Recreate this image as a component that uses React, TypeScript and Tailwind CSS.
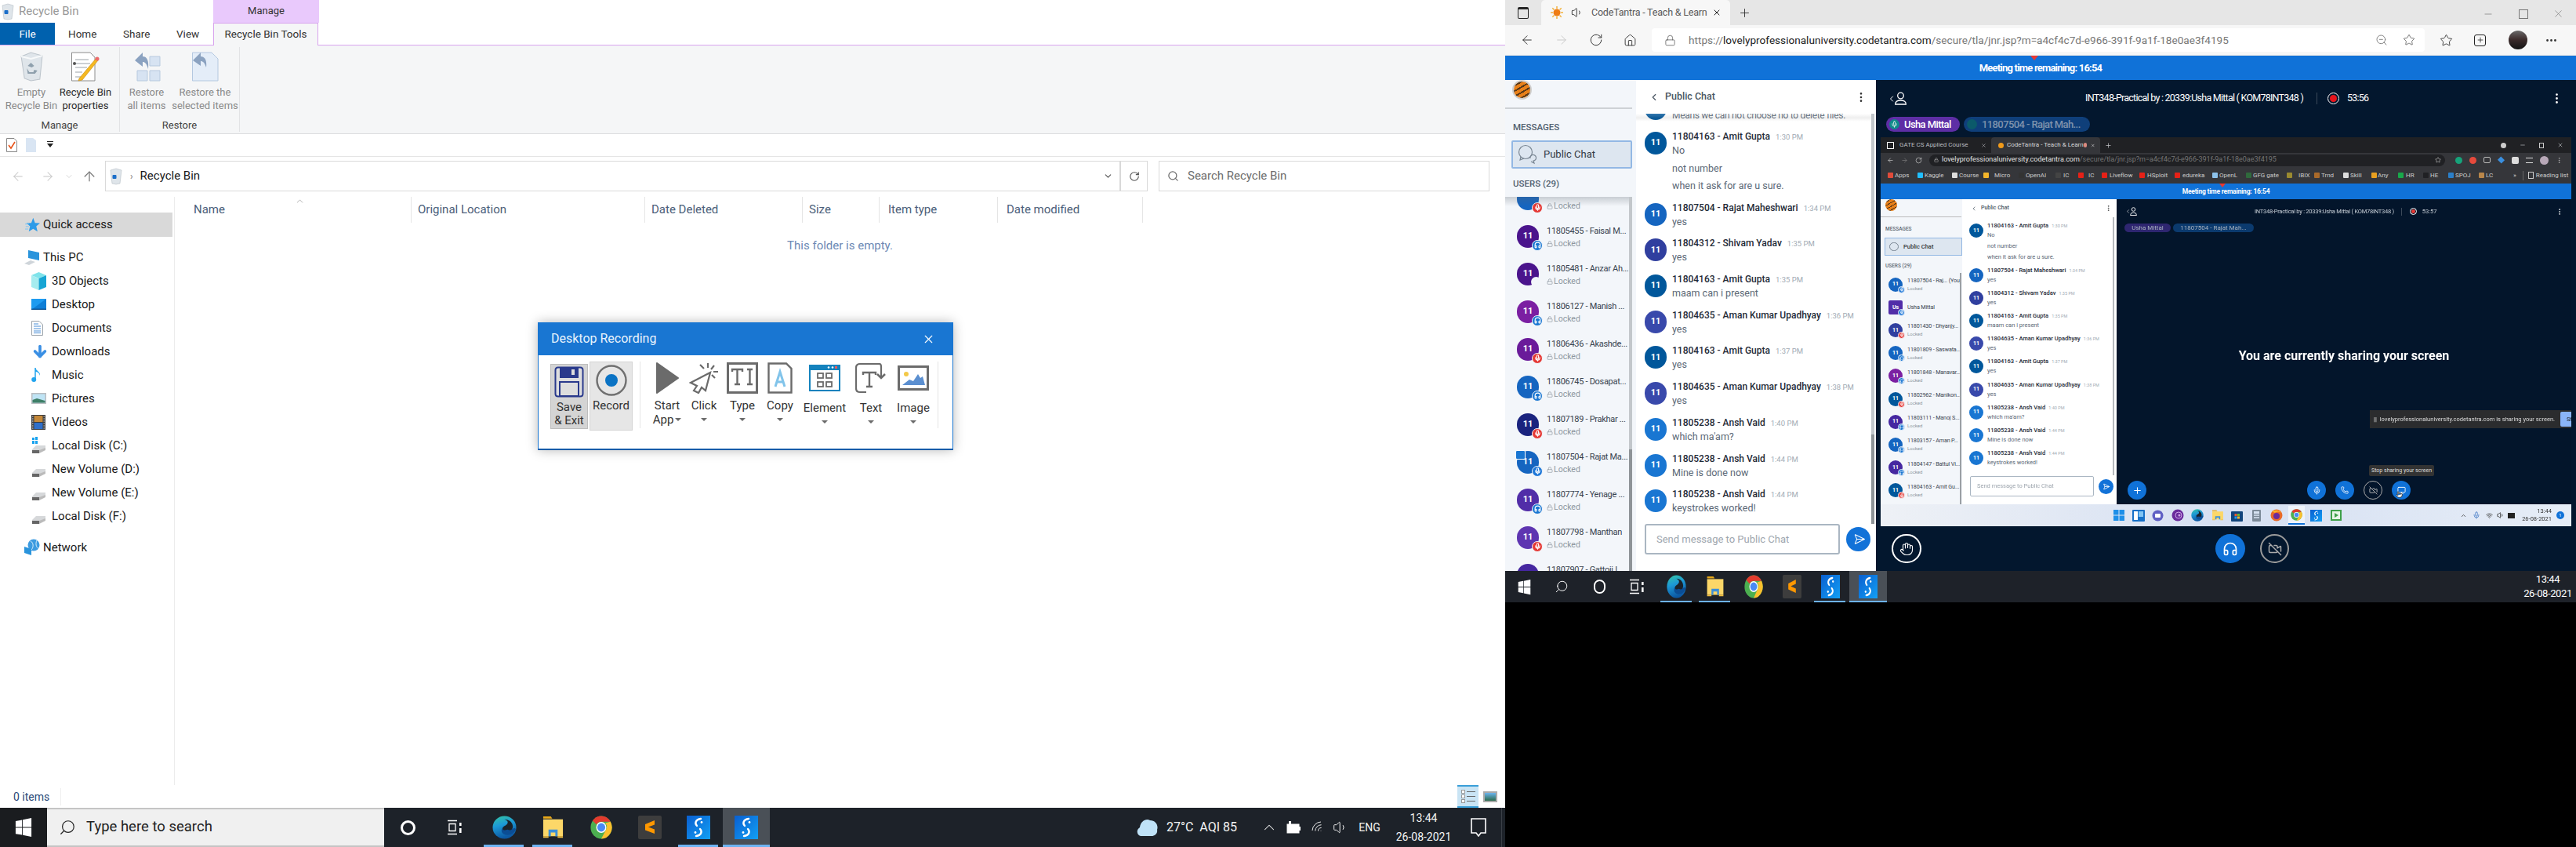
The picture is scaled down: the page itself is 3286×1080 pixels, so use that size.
import { ArrowDown, ArrowLeft, ArrowRight, ArrowUp, ChevronDown, ChevronLeft, ChevronUp, Hand, Headphones, House, Lock, Mic, Minus, Monitor, MoreHorizontal, MoreVertical, Phone, Plus, Pointer, RotateCw, Search, Send, Star, VideoOff, Volume1, Wifi, X, ZoomOut } from "lucide-react"

// small drawn icons
const WinLogo = ({ s = 22 }: { s?: number }) => (
  <svg width={s} height={s + 4} viewBox="0 0 24 24" preserveAspectRatio="none">
    <path d="M1 4.5 10 3.2V11.5H1Z M11 3 23 1V11.5H11Z M1 12.5H10V20.8L1 19.5Z M11 12.5H23V23L11 21Z" fill="#fff" />
  </svg>
)

const EdgeIcon = ({ w = 31, h = 30 }: { w?: number; h?: number }) => (
  <svg width={w} height={h} viewBox="0 0 32 32" preserveAspectRatio="none">
    <defs>
      <linearGradient id="edgeg" x1="0" y1="0" x2="0.3" y2="1">
        <stop offset="0" stopColor="#35c6a0" />
        <stop offset="0.45" stopColor="#1d9ad6" />
        <stop offset="1" stopColor="#0c59a4" />
      </linearGradient>
    </defs>
    <circle cx="16" cy="16" r="15.5" fill="url(#edgeg)" />
    <path d="M31 19C28 26 20 28 15 25 10 22 12 15 18 14 23 13 27 16 26 19 25 21 21 21 20 19 27 21 29 14 31 19Z" fill="#0b4d94" />
    <path d="M20 19C24 21 27 19 27 15 27 9 22 5 16 5 24 8 19 13 16 14 12 16 13 22 20 19Z" fill="#1b2229" />
  </svg>
)

const FolderIcon = ({ w = 29, h = 30 }: { w?: number; h?: number }) => (
  <svg width={w} height={h} viewBox="0 0 30 32" preserveAspectRatio="none">
    <path d="M2 1H12L14 4H2Z" fill="#e8a818" />
    <path d="M2 5H28V28H2Z" fill="#fcd768" />
    <path d="M9 28V19H21V28H18V23H12V28Z" fill="#3a8fd9" />
    <path d="M2 28H9V30H2ZM21 28H28V30H21Z" fill="#f3c040" />
  </svg>
)

const ChromeIcon = ({ w = 28, h = 30 }: { w?: number; h?: number }) => (
  <svg width={w} height={h} viewBox="0 0 32 32" preserveAspectRatio="none">
    <circle cx="16" cy="16" r="15.5" fill="#4caf50" />
    <path d="M16 .5A15.5 15.5 0 0 1 29.4 8.2H16A8 8 0 0 0 9 12L3.3 7A15.5 15.5 0 0 1 16 .5Z" fill="#e33b2e" />
    <path d="M29.4 8.2A15.5 15.5 0 0 1 16 31.5L23 19A8 8 0 0 0 22 10Z" fill="#fbc02d" />
    <circle cx="16" cy="16" r="7.4" fill="#fff" />
    <circle cx="16" cy="16" r="5.8" fill="#4a8af4" />
  </svg>
)

const SublimeIcon = ({ w = 30, h = 30 }: { w?: number; h?: number }) => (
  <svg width={w} height={h} viewBox="0 0 30 30" preserveAspectRatio="none">
    <rect x="0" y="0" width="30" height="30" rx="2" fill="#3d3d3d" />
    <path d="M21 6V11.5L9 16V11Z M9 13 21 17.5V23L9 18.5Z" fill="#ff9800" />
  </svg>
)

const ShareIcon = ({ w = 30, h = 30 }: { w?: number; h?: number }) => (
  <svg width={w} height={h} viewBox="0 0 30 30" preserveAspectRatio="none">
    <defs>
      <linearGradient id="shareg" x1="0" y1="0" x2="1" y2="1">
        <stop offset="0" stopColor="#0a5fd0" />
        <stop offset="1" stopColor="#12a0f5" />
      </linearGradient>
    </defs>
    <rect width="30" height="30" fill="url(#shareg)" />
    <path d="M18 4C11 5 10 10 13 13M12 26C19 25 20 20 17 17" fill="none" stroke="#fff" strokeWidth="2.4" strokeLinecap="round" />
    <circle cx="19" cy="8.5" r="1.4" fill="#fff" />
    <circle cx="11" cy="21.5" r="1.4" fill="#fff" />
  </svg>
)

const TaskView = () => (
  <svg width="20" height="20" viewBox="0 0 20 20" fill="none" stroke="#fff" strokeWidth="1.3">
    <path d="M1 1.5H13M1 18.5H13M3 5.5H11V14.5H3Z" />
    <rect x="16" y="4" width="2.6" height="4" fill="#fff" stroke="none" />
    <rect x="16" y="11" width="2.6" height="6" fill="#fff" stroke="none" />
  </svg>
)

const BinIcon = ({ w = 16, h = 18 }: { w?: number; h?: number }) => (
  <svg width={w} height={h} viewBox="0 0 32 38" preserveAspectRatio="none">
    <path d="M3 6 15 1 29 5 26 35 15 37 7 34Z" fill="#dfe5ea" stroke="#bcc4cb" />
    <path d="M3 6 15 9 29 5" fill="none" stroke="#f7f9fa" strokeWidth="2" />
    <path d="M11 18 15 14 19 18 16 20ZM10 21 13 26 18 26 19 23 23 24 20 28H11Z" fill="#8fa0ad" />
  </svg>
)

const BinBlue = () => (
  <svg width="16" height="22" viewBox="0 0 16 22">
    <path d="M1 3 8 1 15 3 13 20 8 21 3 20Z" fill="#dfe5ea" stroke="#b6bec5" strokeWidth=".6" />
    <rect x="3.5" y="9" width="5" height="5" rx="1" fill="#1c6fc9" />
  </svg>
)

const QuickStar = () => (
  <svg width="19" height="19" viewBox="0 0 24 24">
    <path d="M13 1 16 9 24 9.5 18 14.5 20 23 13 18.5 6 23 8 14.5 2 9.5 10 9Z" fill="#2c9be8" />
    <path d="M0 11H6M1 15H6M0 19H5" stroke="#7cc4f2" strokeWidth="1.2" />
  </svg>
)

const DiskIcon = ({ win }: { win?: boolean }) => (
  <svg width="19" height="22" viewBox="0 0 19 22">
    {win && <path d="M1 1H4V4H1ZM5 0H8V4H5ZM1 5H4V9H1ZM5 5H8V9H5Z" fill="#18a2ee" />}
    <path d="M1 16 6 11H18V15L2 21H1Z" fill="#d6d8da" />
    <path d="M1 17H10V21H1Z" fill="#666" />
    <path d="M10 17 18 14V17L10 21Z" fill="#bbb" />
  </svg>
)

const NavIcon = ({ kind }: { kind: string }) => {
  if (kind === "pc")
    return (
      <svg width="20" height="20" viewBox="0 0 20 20">
        <path d="M5 1 19 4V14L5 11Z" fill="#2a94dc" />
        <path d="M0 18 8 14 14 16 6 20Z" fill="#cfd5da" />
      </svg>
    )
  if (kind === "3d")
    return (
      <svg width="19" height="24" viewBox="0 0 19 24">
        <path d="M9.5 1 19 5 9.5 9 0 5Z" fill="#7fe3ea" />
        <path d="M0 5 9.5 9V24L0 20Z" fill="#a5ecef" />
        <path d="M19 5V20L9.5 24V9Z" fill="#17a5d4" />
      </svg>
    )
  if (kind === "desk")
    return (
      <svg width="19" height="14" viewBox="0 0 19 14">
        <rect width="19" height="14" fill="#1e9bf0" />
        <path d="M0 14 19 0V14Z" fill="#0e7ed6" />
        <rect y="12.6" width="19" height="1.4" fill="#084f91" />
      </svg>
    )
  if (kind === "doc")
    return (
      <svg width="15" height="19" viewBox="0 0 15 19">
        <path d="M.5.5H10L14.5 5V18.5H.5Z" fill="#fdfdfd" stroke="#9ba3aa" />
        <path d="M3 4H9M3 7H12M3 10H12M3 13H12M3 15.5H12" stroke="#4a90d9" strokeWidth="1" />
      </svg>
    )
  if (kind === "down") return <ArrowDown size={22} strokeWidth={4} color="#3a8fe4" />
  if (kind === "music")
    return (
      <svg width="13" height="20" viewBox="0 0 13 20">
        <path d="M5 1V15" stroke="#22a4ee" strokeWidth="1.5" />
        <path d="M5 1C6 5 12 6 11 11 10 7 7 6 5 6Z" fill="#22a4ee" />
        <ellipse cx="3.2" cy="16" rx="3" ry="3" fill="#22a4ee" />
      </svg>
    )
  if (kind === "pic")
    return (
      <svg width="19" height="14" viewBox="0 0 19 14">
        <rect width="19" height="14" fill="#b8bcc0" />
        <rect x="1.5" y="1.5" width="16" height="11" fill="#bfe4f5" />
        <path d="M1.5 9 7 7 17.5 10V12.5H1.5Z" fill="#3e7f67" />
      </svg>
    )
  if (kind === "vid")
    return (
      <svg width="18" height="19" viewBox="0 0 18 19">
        <rect width="18" height="19" fill="#3c3c3c" />
        <rect x="3.5" y="1" width="11" height="8" fill="#c4883a" />
        <rect x="3.5" y="10" width="11" height="8" fill="#2f6fc9" />
        <path d="M1 2H2.5M1 5H2.5M1 8H2.5M1 11H2.5M1 14H2.5M1 17H2.5M15.5 2H17M15.5 5H17M15.5 8H17M15.5 11H17M15.5 14H17M15.5 17H17" stroke="#ddd" />
      </svg>
    )
  if (kind === "c") return <DiskIcon win />
  if (kind === "disk") return <DiskIcon />
  return (
    <svg width="20" height="22" viewBox="0 0 20 22">
      <circle cx="12" cy="8" r="7.5" fill="#3d9be0" />
      <path d="M8 3C12 5 12 11 9 14M16 2C14 6 15 11 18 12" stroke="#d7eefb" fill="none" />
      <path d="M0 10 9 13V21L0 18Z" fill="#2a94dc" />
    </svg>
  )
}

const navRows = [
  ["3d", "3D Objects"], ["desk", "Desktop"], ["doc", "Documents"], ["down", "Downloads"], ["music", "Music"],
  ["pic", "Pictures"], ["vid", "Videos"], ["c", "Local Disk (C:)"], ["disk", "New Volume (D:)"], ["disk", "New Volume (E:)"], ["disk", "Local Disk (F:)"],
]

const columns = [
  { t: "Name", w: "w-[302px] pl-[24px]" },
  { t: "Original Location", w: "w-[298px] pl-[8px]" },
  { t: "Date Deleted", w: "w-[201px] pl-[8px]" },
  { t: "Size", w: "w-[98px] pl-[8px]" },
  { t: "Item type", w: "w-[151px] pl-[11px]" },
  { t: "Date modified", w: "w-[185px] pl-[11px]" },
]

const RibbonBtn = ({ icon, lines, off, w }: { icon: React.ReactNode; lines: string[]; off?: boolean; w: string }) => (
  <div className={`flex flex-col items-center ${w}`}>
    <div className="h-[45px] flex items-center justify-center">{icon}</div>
    <div className={`text-[13px] leading-[17px] mt-[2px] text-center whitespace-nowrap ${off ? "text-[#8a8a8a]" : "text-[#2b2b2b]"}`}>
      {lines[0]}
      <br />
      {lines[1]}
    </div>
  </div>
)

const Explorer = () => (
  <div className="flex-1 flex flex-col bg-white text-[#1a1a1a] min-h-0">
    <div className="h-[29px] flex items-start">
      <div className="pl-[2px] pt-[4px] w-[24px]"><BinBlue /></div>
      <div className="text-[15px] leading-[29px] text-[#999] w-[248px]">Recycle Bin</div>
      <div className="w-[135px] h-[29px] bg-[#e9c9fc] text-[13px] leading-[27px] text-center text-[#333]">Manage</div>
    </div>
    <div className="h-[29px] flex border-b border-[#d8a4ee] text-[13.5px]">
      <div className="w-[70px] bg-[#0061ae] text-white leading-[28px] text-center">File</div>
      <div className="w-[70px] leading-[28px] pl-[17px] text-[#333]">Home</div>
      <div className="w-[68px] leading-[28px] pl-[17px] text-[#333]">Share</div>
      <div className="w-[64px] leading-[28px] pl-[17px] text-[#333]">View</div>
      <div className="w-[134px] h-[29px] -mb-px bg-[#f5f6f7] border border-b-0 border-[#d8a4ee] leading-[27px] text-center text-[#333] z-10">Recycle Bin Tools</div>
    </div>
    <div className="h-[113px] bg-[#f5f6f7] border-b border-[#dcdddf] flex text-[#444]">
      <div className="w-[153px] border-r border-[#e2e3e5] flex flex-col my-[2px]">
        <div className="flex pt-[2px] pl-[7px] gap-[3px]">
          <RibbonBtn off w="w-[66px]" lines={["Empty", "Recycle Bin"]} icon={<BinIcon w={33} h={38} />} />
          <RibbonBtn w="w-[66px]" lines={["Recycle Bin", "properties"]} icon={
            <svg width="36" height="38" viewBox="0 0 36 38">
              <path d="M.5 1H24L30 7V37H.5Z" fill="#fff" stroke="#8c8c8c" />
              <path d="M5 10H22M5 15H24M5 20H20M5 26H14M5 32H14" stroke="#9aa1a7" />
              <circle cx="4" cy="15" r="2" fill="#555" />
              <path d="M10 34 31 9 34 11 14 36 9 37Z" fill="#f5b820" stroke="#c58a10" strokeWidth=".6" />
              <circle cx="33" cy="9" r="2.5" fill="#ee6a6a" />
            </svg>
          } />
        </div>
        <div className="mt-auto -mb-px text-center text-[13px] leading-[18px]">Manage</div>
      </div>
      <div className="w-[153px] border-r border-[#e2e3e5] flex flex-col my-[2px]">
        <div className="flex pt-[2px] pl-[4px] gap-[2px]">
          <RibbonBtn off w="w-[60px]" lines={["Restore", "all items"]} icon={
            <svg width="36" height="38" viewBox="0 0 36 38">
              <path d="M3 11 13 1V6C19 6 21 12 20 22 18 15 16 13 13 13V19Z" fill="#8ba2c0" />
              <path d="M22 6H35V18H22ZM6 24H19V37H6ZM22 24H35V37H22Z" fill="#d7e3f2" stroke="#b7c9de" />
            </svg>
          } />
          <RibbonBtn off w="w-[85px]" lines={["Restore the", "selected items"]} icon={
            <svg width="34" height="38" viewBox="0 0 34 38">
              <path d="M.5 1H25L33 9V37H.5Z" fill="#e4edf8" stroke="#b4c8e0" />
              <path d="M1 11 11 1V6C17 6 19 12 18 20 16 14 14 12 11 12V18Z" fill="#8ba2c0" />
            </svg>
          } />
        </div>
        <div className="mt-auto -mb-px text-center text-[13px] leading-[18px]">Restore</div>
      </div>
    </div>
    <div className="h-[29px] border-b border-[#e5e5e5] flex items-center pl-[8px] gap-[11px]">
      <svg width="14" height="18" viewBox="0 0 14 18">
        <path d="M.5.5H10L13.5 4V17.5H.5Z" fill="#fff" stroke="#888" />
        <path d="M3 9 6 13 11 5" fill="none" stroke="#e8541a" strokeWidth="1.6" />
      </svg>
      <svg width="13" height="18" viewBox="0 0 13 18"><path d="M0 0H9L13 3V18H0Z" fill="#d9e5f3" /></svg>
      <svg width="8" height="10" viewBox="0 0 8 10" className="ml-[3px]"><path d="M0 0H8V1H0ZM0 3H8L4 8Z" fill="#222" /></svg>
    </div>
    <div className="h-[51px] flex items-start pt-[5px]">
      <div className="w-[134px] h-[39px] flex items-center text-[#c6c6c6] pl-[14px]">
        <ArrowLeft size={18} strokeWidth={1.4} />
        <ArrowRight size={18} strokeWidth={1.4} className="ml-[20px]" />
        <ChevronDown size={12} strokeWidth={1.4} className="ml-[12px]" />
        <ArrowUp size={20} strokeWidth={1.5} className="ml-[10px] text-[#777]" />
      </div>
      <div className="w-[1296px] h-[39px] border border-[#d9d9d9] flex items-center pl-[5px] text-[15px]">
        <BinBlue />
        <span className="text-[#777] text-[12px] ml-[10px] mr-[9px]">›</span>
        <span>Recycle Bin</span>
        <ChevronDown size={13} className="ml-auto mr-[8px] text-[#555]" />
        <div className="w-px h-[38px] bg-[#d9d9d9]"></div>
      </div>
      <div className="w-[34px] h-[39px] border border-l-0 border-[#d9d9d9] flex items-center justify-center text-[#555]"><RotateCw size={14} /></div>
      <div className="ml-[14px] w-[422px] h-[39px] border border-[#d9d9d9] flex items-center pl-[10px] text-[15px] text-[#6d6d6d]">
        <Search size={15} className="mr-[11px]" />
        Search Recycle Bin
      </div>
    </div>
    <div className="flex-1 flex min-h-0">
      <div className="w-[223px] border-r border-[#ececec] pt-[20px] text-[15px]">
        <div className="h-[31px] w-[220px] bg-[#d9d9d9] flex items-center pl-[32px] gap-[4px]"><QuickStar />Quick access</div>
        <div className="h-[30px] mt-[11px] flex items-center pl-[31px] gap-[4px]"><NavIcon kind="pc" />This PC</div>
        {navRows.map(([k, t]) => (
          <div key={t} className="h-[30px] flex items-center pl-[40px]">
            <div className="w-[26px] flex items-center"><NavIcon kind={k} /></div>
            {t}
          </div>
        ))}
        <div className="h-[30px] mt-[10px] flex items-center pl-[31px] gap-[4px]"><NavIcon kind="net" />Network</div>
      </div>
      <div className="flex-1 flex flex-col items-center">
        <div className="self-start flex h-[33px] items-center text-[15px] text-[#4c607a] relative">
          <ChevronUp size={13} strokeWidth={1.2} className="absolute left-[153px] top-[-1px] text-[#888]" />
          {columns.map((c) => (
            <div key={c.t} className={`${c.w} h-[33px] leading-[33px] border-r border-[#e5e5e5]`}>{c.t}</div>
          ))}
        </div>
        <div className="mt-[18px] text-[15px] leading-[22px] text-[#6d8ab5]">This folder is empty.</div>
      </div>
    </div>
    <div className="h-[29px] flex items-center text-[14px] text-[#2b4a78]">
      <div className="pl-[17px] w-[78px] border-r border-[#eee] leading-[22px]">0 items</div>
      <div className="ml-auto mr-[10px] flex items-center gap-[6px]">
        <div className="w-[27px] h-[29px] bg-[#c9e4f4] border-t-2 border-b-2 border-[#3a9fd8] flex flex-col items-center justify-center gap-[1px]">
          {[0, 1, 2].map((i) => (
            <div key={i} className="flex items-center gap-[2px]">
              <div className="w-[5px] h-[5px] bg-white border border-[#999]"></div>
              <div className="w-[11px] h-[1px] bg-[#666]"></div>
            </div>
          ))}
        </div>
        <div className="w-[18px] h-[14px] border-2 border-[#aaa] bg-gradient-to-b from-[#6db4ef] to-[#2d6b4d]"></div>
      </div>
    </div>
  </div>
)

const Caret = () => <span className="block w-0 h-0 border-l-[4px] border-r-[4px] border-t-[4px] border-l-transparent border-r-transparent border-t-[#6b6b6b]"></span>

const recTools = [
  { k: "Start", l2: "App", w: "w-[40px]", mt: "mt-[5px]" },
  { k: "Click", w: "w-[50px]", mt: "mt-[5px]" },
  { k: "Type", w: "w-[48px]", mt: "mt-[5px]" },
  { k: "Copy", w: "w-[48px]", mt: "mt-[5px]" },
  { k: "Element", w: "w-[66px]", mt: "mt-[8px]" },
  { k: "Text", w: "w-[52px]", mt: "mt-[8px]" },
  { k: "Image", w: "w-[56px]", mt: "mt-[8px]" },
]

const RecIcon = ({ k }: { k: string }) => {
  const g = "#6b6b6b"
  if (k === "Start") return <svg width="30" height="40" viewBox="0 0 30 40"><path d="M2 1 29 20 2 39Z" fill={g} stroke={g} strokeLinejoin="round" strokeWidth="2" /></svg>
  if (k === "Click")
    return (
      <svg width="38" height="40" viewBox="0 0 38 40" fill="none" stroke={g}>
        <path d="M27 13 2 26 10 30 6 36 12 39 16 32 21 36Z" strokeWidth="2.2" fill="#fff" />
        <path d="M24 1V7M32 4 28 9M37 12H31M14 3 19 8M33 20 29 16" strokeWidth="2.2" />
      </svg>
    )
  if (k === "Type")
    return (
      <svg width="40" height="40" viewBox="0 0 40 40" fill="none" stroke={g}>
        <rect x="1.5" y="1.5" width="37" height="37" strokeWidth="3" />
        <path d="M7 12V9H20V12M13.5 9V28M10 28H17M26 9H33M29.5 9V28M26 28H33" strokeWidth="2.4" />
      </svg>
    )
  if (k === "Copy")
    return (
      <svg width="32" height="40" viewBox="0 0 32 40" fill="none">
        <path d="M1.5 1.5H24L30.5 8V38.5H1.5Z" stroke={g} strokeWidth="2.4" />
        <path d="M10 31 16 12 22 31M12 25H20" stroke="#82c4ea" strokeWidth="3" />
      </svg>
    )
  if (k === "Element")
    return (
      <svg width="40" height="34" viewBox="0 0 40 34">
        <rect width="40" height="34" fill="#1482bd" />
        <rect x="2" y="7" width="36" height="25" fill="#fff" />
        <circle cx="25" cy="3.5" r="1.3" fill="#fff" /><circle cx="30" cy="3.5" r="1.3" fill="#fff" /><rect x="33" y="2" width="3" height="3" fill="#ee5a5a" />
        <g fill="none" stroke="#6b6b6b" strokeWidth="1.8"><rect x="11" y="11" width="7" height="6" /><rect x="22" y="11" width="7" height="6" /><rect x="11" y="22" width="7" height="6" /><rect x="22" y="22" width="7" height="6" /></g>
      </svg>
    )
  if (k === "Text")
    return (
      <svg width="40" height="40" viewBox="0 0 40 40" fill="none" stroke={g}>
        <path d="M30 2H6Q1 2 1 7V33Q1 38 6 38H14M29 2H31Q33 2 33 6V18" strokeWidth="2.2" />
        <path d="M28 15 33 20 38 15" strokeWidth="2.5" />
        <path d="M10 16V13H26V16M18 13V31M14 31H22" strokeWidth="2.4" />
      </svg>
    )
  return (
    <svg width="40" height="32" viewBox="0 0 40 32">
      <rect x="1.5" y="1.5" width="37" height="29" fill="#fff" stroke={g} strokeWidth="3" />
      <circle cx="11" cy="11" r="3" fill="#f3c948" />
      <path d="M6 25 15 18 20 20 26 11 29 16 32 14 35 25Z" fill="#5b8fd0" />
    </svg>
  )
}

const Dialog = () => (
  <div className="absolute left-[686px] top-[411px] w-[530px] h-[163px] bg-white border-x border-[#1976d2] border-b-2 border-b-[#0d5ba8] shadow-[0_0_14px_rgba(0,0,0,0.28)]">
    <div className="h-[42px] bg-[#1976d2] flex items-center justify-between px-[16px] text-[16px] text-[#e8f3fc]">
      <span>Desktop Recording</span>
      <X size={17} strokeWidth={1.6} className="mr-[6px] text-white" />
    </div>
    <div className="flex items-start pl-[15px] pt-[8px] text-[15px] text-[#333]">
      <div className="w-[48px] h-[83px] mt-[3px] bg-[#d4d4d4] border border-[#bdbdbd] flex flex-col items-center pt-[2px] leading-[17px] text-center">
        <svg width="38" height="40" viewBox="0 0 38 40" fill="none" stroke="#2a3a8c" strokeWidth="2">
          <path d="M1.5 5Q1.5 1.5 5 1.5H33Q36.5 1.5 36.5 5V35Q36.5 38.5 33 38.5H5Q1.5 38.5 1.5 35Z" fill="#dedede" />
          <rect x="8" y="2" width="22" height="12" fill="#2a3a8c" />
          <rect x="22" y="4" width="4" height="7" fill="#dedede" stroke="none" />
          <rect x="7" y="20" width="24" height="18" />
        </svg>
        <span className="mt-[4px]">Save</span>
        <span>&amp; Exit</span>
      </div>
      <div className="w-[55px] h-[88px] ml-[2px] bg-[#e6e6e6] border border-[#d4d4d4] flex flex-col items-center pt-[3px]">
        <svg width="40" height="40" viewBox="0 0 40 40">
          <circle cx="20" cy="20" r="18.5" fill="none" stroke="#707070" strokeWidth="2.4" />
          <circle cx="20" cy="20" r="8" fill="#0b73c4" />
        </svg>
        <span className="mt-[3px] leading-[18px]">Record</span>
      </div>
      <div className="w-px h-[85px] ml-[9px] bg-[#e5e5e5]"></div>
      <div className="flex items-start ml-[14px]">
        {recTools.map((t) => (
          <div key={t.k} className={`${t.w} flex flex-col items-center shrink-0 ${t.k === "Start" ? "mr-[2px]" : ""}`}>
            <div className="h-[42px] flex items-center justify-center"><RecIcon k={t.k} /></div>
            <span className={`${t.mt} leading-[18px]`}>{t.k}</span>
            {t.l2 ? (
              <span className="leading-[18px] flex items-center gap-[2px]">{t.l2}<Caret /></span>
            ) : (
              <div className="h-[18px] flex items-center"><Caret /></div>
            )}
          </div>
        ))}
      </div>
      <div className="w-px h-[85px] ml-[3px] bg-[#e5e5e5]"></div>
    </div>
  </div>
)

const Taskbar1 = () => (
  <div className="h-[50px] flex bg-[#1d2229] text-white shrink-0">
    <div className="w-[60px] flex items-center justify-center bg-[#1a1c1f]"><WinLogo /></div>
    <div className="w-[430px] bg-[#f0f0f0] border-y-2 border-[#c4c4c4] flex items-center pl-[15px] text-[18.5px] text-[#222]">
      <Search size={22} strokeWidth={1.3} className="-scale-x-100 mr-[13px]" />
      Type here to search
    </div>
    <div className="w-[60px] flex items-center justify-center"><div className="w-[19px] h-[19px] rounded-full border-[3px] border-white"></div></div>
    <div className="w-[60px] flex items-center justify-center"><TaskView /></div>
    <div className="w-[2px]"></div>
    <div className="w-[62px] flex items-center justify-center relative"><EdgeIcon /><div className="absolute bottom-0 left-[5px] right-[6px] h-[3px] bg-[#6db3f2]"></div></div>
    <div className="w-[62px] flex items-center justify-center relative"><FolderIcon /><div className="absolute bottom-0 left-[5px] right-[6px] h-[3px] bg-[#6db3f2]"></div></div>
    <div className="w-[62px] flex items-center justify-center"><ChromeIcon /></div>
    <div className="w-[62px] flex items-center justify-center"><SublimeIcon /></div>
    <div className="w-[62px] flex items-center justify-center relative"><ShareIcon /><div className="absolute bottom-0 left-[5px] right-[6px] h-[3px] bg-[#6db3f2]"></div></div>
    <div className="w-[60px] bg-[#4a5057] flex items-center justify-center relative"><ShareIcon /><div className="absolute bottom-0 inset-x-0 h-[3px] bg-[#6db3f2]"></div></div>
    <div className="ml-auto flex items-center text-[15px] text-[#f4f4f4]">
      <svg width="28" height="24" viewBox="0 0 28 24" className="mr-[1px]">
        <path d="M5 23C0 22-1 15 4 12 5 4 12 0 17 3 24 3 28 9 26 15 27 20 23 23 19 23Z" fill="#bfe2f7" />
      </svg>
      <div className="w-[102px] ml-[9px] text-[16px] whitespace-nowrap">27°C&nbsp; AQI 85</div>
      <div className="w-[30px] ml-[14px] flex justify-center"><ChevronUp size={22} strokeWidth={1.1} /></div>
      <div className="w-[31px] flex justify-center">
        <svg width="20" height="18" viewBox="0 0 20 18"><rect x="2" y="5" width="15" height="11" fill="#fff" stroke="#fff" /><rect x="17" y="8" width="2" height="5" fill="#fff" /><rect x="4" y="1" width="3" height="4" fill="#fff" /></svg>
      </div>
      <div className="w-[31px] flex justify-center"><Wifi size={18} strokeWidth={1.2} className="rotate-[-45deg]" /></div>
      <div className="w-[28px] flex justify-center"><Volume1 size={20} strokeWidth={1.2} /></div>
      <div className="w-[46px] text-center text-[14px]">ENG</div>
      <div className="w-[92px] text-center text-[14px] leading-[24px]">13:44<br />26-08-2021</div>
      <div className="w-[48px] flex justify-center">
        <svg width="20" height="24" viewBox="0 0 20 24" fill="none" stroke="#fff" strokeWidth="1.6"><path d="M1 1H19V19H13L10 23 7 19H1Z" /></svg>
      </div>
      <div className="w-[5px]"></div>
      <div className="w-px h-[50px] bg-[#3c4148]"></div>
      <div className="w-[4px]"></div>
    </div>
  </div>
)

const users = [
  { n: "11805455 - Faisal M...", c: "bg-[#4a148c]", b: "head" },
  { n: "11805481 - Anzar Ah...", c: "bg-[#4a148c]", b: "none" },
  { n: "11806127 - Manish ...", c: "bg-[#7b1fa2]", b: "head" },
  { n: "11806436 - Akashde...", c: "bg-[#6a1b9a]", b: "off" },
  { n: "11806745 - Dosapat...", c: "bg-[#1565c0]", b: "head" },
  { n: "11807189 - Prakhar ...", c: "bg-[#1a237e]", b: "off" },
  { n: "11807504 - Rajat Ma...", c: "bg-[#1565c0]", b: "mic", chat: true },
  { n: "11807774 - Yenage ...", c: "bg-[#512da8]", b: "head" },
  { n: "11807798 - Manthan", c: "bg-[#5e35b1]", b: "off" },
  { n: "11807907 - Gattoji I...", c: "bg-[#4527a0]", b: "none" },
]

const Badge = ({ b, small }: { b: string; small?: boolean }) => {
  if (b === "none") return small ? null : <div className="absolute right-[-3px] bottom-[-2px] w-[13px] h-[13px] rounded-full bg-[#f3f6fa]"></div>
  const size = small ? "w-[9px] h-[9px] right-[-3px] bottom-[-2px]" : "w-[14px] h-[14px] right-[-5px] bottom-[-4px]"
  const bg = b === "off" ? "bg-[#e53935]" : b === "mic" ? "bg-[#1f78d8]" : "bg-[#1976d2]"
  const i = small ? 6 : 9
  return (
    <div className={`absolute ${size} rounded-full ${bg} flex items-center justify-center text-white border border-[#f3f6fa]`}>
      {b === "head" ? <Headphones size={i} strokeWidth={3} /> : <Mic size={i} strokeWidth={3} />}
    </div>
  )
}

const Sidebar = () => (
  <div className="w-[167px] h-full bg-[#f3f6fa] flex flex-col shrink-0">
    <div className="h-[37px] mr-[5px] border-b-2 border-[#cdd1d5] pl-[9px]">
      <div className="w-[25px] h-[25px] rounded-full bg-[repeating-linear-gradient(150deg,#e8801a_0_4px,#5a3a1a_4px_6px)] border-2 border-[#cfcfcf]"></div>
    </div>
    <div className="mt-[15px] pl-[10px] text-[11.5px] leading-[16px] text-[#51606f] font-medium">MESSAGES</div>
    <div className="mt-[9px] ml-[8px] mr-[5px] h-[36px] bg-[#dde6f0] border-2 border-[#93b8e4] rounded-[2px] flex items-center pl-[6px] text-[13px] text-[#333a44]">
      <svg width="24" height="26" viewBox="0 0 24 26" fill="none" stroke="#7a8794" strokeWidth="1.2" className="mr-[9px]">
        <circle cx="10" cy="10" r="8.5" /><path d="M4 16 3 20 8 18" />
        <path d="M16 18a3.8 3.8 0 1 1 4 3l1 3-4-2" />
      </svg>
      Public Chat
    </div>
    <div className="mt-[11px] pl-[10px] text-[11.5px] leading-[16px] text-[#51606f] font-medium">USERS (29)</div>
    <div className="flex-1 flex min-h-0 pt-[9px]">
      <div className="flex-1 overflow-hidden relative min-w-0">
        <div className="absolute top-0 inset-x-0 h-[12px] z-10 bg-gradient-to-b from-[rgba(90,100,110,0.28)] to-transparent"></div>
        <div className="-mt-[22px] pl-[15px]">
          <div className="h-[48px] flex items-center gap-[10px]">
            <div className="relative w-[28px] h-[29px] rounded-full bg-[#1565c0] shrink-0"><Badge b="off" /></div>
            <div className="text-[10.5px] pt-[20px] text-[#8d96a0] flex items-center gap-[1px]"><Lock size={8} />Locked</div>
          </div>
          {users.map((u) => (
            <div key={u.n} className="h-[48px] flex items-center gap-[10px]">
              <div className={`relative w-[28px] h-[29px] rounded-full ${u.c} text-white text-[11px] font-bold flex items-center justify-center shrink-0`}>
                11
                <Badge b={u.b} />
                {u.chat && <div className="absolute left-[-2px] top-[-1px] w-[13px] h-[12px] rounded-[2px] bg-[#1976d2] border border-white"></div>}
              </div>
              <div className="whitespace-nowrap mt-[4px]">
                <div className="text-[11px] tracking-[-0.3px] leading-[16px] text-[#37424e]">{u.n}</div>
                <div className="text-[10.5px] leading-[16px] text-[#8d96a0] flex items-center gap-[1px]"><Lock size={8} />Locked</div>
              </div>
            </div>
          ))}
        </div>
      </div>
      <div className="w-[4px] mr-[5px] bg-[#c3c7cb] flex flex-col justify-end"><div className="h-[155px] bg-[#8f9498]"></div></div>
    </div>
  </div>
)

const chat = [
  { n: "11804163 - Amit Gupta", t: "1:30 PM", c: "bg-[#01579b]", b: ["No", "not number", "when it ask for are u sure."] },
  { n: "11807504 - Rajat Maheshwari", t: "1:34 PM", c: "bg-[#1565c0]", b: ["yes"] },
  { n: "11804312 - Shivam Yadav", t: "1:35 PM", c: "bg-[#303f9f]", b: ["yes"] },
  { n: "11804163 - Amit Gupta", t: "1:35 PM", c: "bg-[#01579b]", b: ["maam can i present"] },
  { n: "11804635 - Aman Kumar Upadhyay", t: "1:36 PM", c: "bg-[#3949ab]", b: ["yes"] },
  { n: "11804163 - Amit Gupta", t: "1:37 PM", c: "bg-[#01579b]", b: ["yes"] },
  { n: "11804635 - Aman Kumar Upadhyay", t: "1:38 PM", c: "bg-[#3949ab]", b: ["yes"] },
  { n: "11805238 - Ansh Vaid", t: "1:40 PM", c: "bg-[#1976d2]", b: ["which ma'am?"] },
  { n: "11805238 - Ansh Vaid", t: "1:44 PM", c: "bg-[#1976d2]", b: ["Mine is done now"] },
  { n: "11805238 - Ansh Vaid", t: "1:44 PM", c: "bg-[#1976d2]", b: ["keystrokes worked!"] },
]

const ChatPanel = () => (
  <div className="w-[306px] h-full bg-white flex flex-col shrink-0">
    <div className="h-[43px] flex items-center pl-[16px] text-[12.5px] font-medium text-[#4a5663] shrink-0">
      <ChevronLeft size={14} className="mr-[7px]" />
      Public Chat
      <MoreVertical size={16} className="ml-auto mr-[11px] text-[#333]" />
    </div>
    <div className="h-[523px] flex shrink-0">
      <div className="flex-1 overflow-hidden relative pl-[11px]">
        <div className="absolute top-0 inset-x-0 h-[10px] z-10 bg-gradient-to-b from-[rgba(255,255,255,0.2)] via-[rgba(120,120,120,0.12)] to-transparent"></div>
        <div className="-mt-[7px]">
          <div className="h-[18px] mb-[9px] flex">
            <div className="w-[28px] h-[29px] -mt-[14px] rounded-full bg-[#01579b] mr-[7px]"></div>
            <span className="text-[12px] tracking-[-0.3px] leading-[18px] text-[#5b6876] whitespace-nowrap">Means we can not choose no to delete files.</span>
          </div>
          {chat.map((m, i) => (
            <div key={i} className="flex mb-[9.7px]">
              <div className={`w-[28px] h-[29px] mt-[3px] rounded-full ${m.c} text-white text-[11px] font-bold flex items-center justify-center mr-[7px] shrink-0`}>11</div>
              <div>
                <div className="h-[18px] leading-[18px] whitespace-nowrap text-[12px] font-medium text-[#1f2b38]">
                  {m.n}
                  <span className="ml-[7px] text-[9.5px] font-normal text-[#a2abb4]">{m.t}</span>
                </div>
                {m.b.map((l, j) => (
                  <div key={l} className={`h-[18px] leading-[18px] text-[12.5px] text-[#5b6876] ${j > 0 ? "mt-[4.5px]" : ""}`}>{l}</div>
                ))}
              </div>
            </div>
          ))}
        </div>
      </div>
      <div className="w-[4px] mr-[2px] bg-[#c3c7cb] flex flex-col justify-end"><div className="h-[114px] bg-[#8f9498]"></div></div>
    </div>
    <div className="flex items-center pl-[11px]">
      <div className="w-[249px] h-[39px] border-2 border-[#aab6c2] rounded-[3px] flex items-center pl-[13px] text-[13px] text-[#9ea6ae]">Send message to Public Chat</div>
      <div className="ml-[8px] w-[31px] h-[31px] rounded-full bg-[#1272d8] flex items-center justify-center text-white"><Send size={15} className="rotate-45 -ml-[3px]" strokeWidth={1.6} /></div>
    </div>
  </div>
)

const bookmarks = [
  { t: "Apps", w: 38, c: "bg-[#e04b3a]", tx: 9 },
  { t: "Kaggle", w: 44, c: "bg-[#20beff]", tx: 9 },
  { t: "Course", w: 40, c: "bg-[#ddd]", tx: 9 },
  { t: "Micro", w: 45, c: "bg-[#f3b52a]", tx: 14 },
  { t: "OpenAI", w: 47, c: "bg-[#333]", tx: 9 },
  { t: "IC", w: 29, c: "bg-[#444]", tx: 10 },
  { t: "IC", w: 30, c: "bg-[#e62117]", tx: 13 },
  { t: "Liveflow", w: 48, c: "bg-[#e62117]", tx: 10 },
  { t: "HSploit", w: 45, c: "bg-[#e62117]", tx: 10 },
  { t: "edureka", w: 48, c: "bg-[#e62117]", tx: 10 },
  { t: "OpenL", w: 43, c: "bg-[#8cc1ea]", tx: 9 },
  { t: "GFG gate", w: 52, c: "bg-[#2f6a3c]", tx: 9 },
  { t: "IBIX", w: 35, c: "bg-[#9a8a30]", tx: 15 },
  { t: "Trnd", w: 37, c: "bg-[#aa6a2a]", tx: 9 },
  { t: "Skill", w: 36, c: "bg-[#ddd]", tx: 9 },
  { t: "Any", w: 34, c: "bg-[#e8a020]", tx: 8 },
  { t: "HR", w: 32, c: "bg-[#18a84a]", tx: 10 },
  { t: "HE", w: 32, c: "bg-[#202124]", tx: 9 },
  { t: "SPOJ", w: 39, c: "bg-[#2a7fc9]", tx: 9 },
  { t: "LC", w: 43, c: "bg-[#b8864a]", tx: 9 },
]

const nestedUsers = [
  { n: "11807504 - Raj... (You)", c: "bg-[#1565c0]", b: "mic" },
  { n: "Usha Mittal", c: "bg-[#512da8]", b: "mic", square: true, nolock: true },
  { n: "11801430 - Dhyanjy...", c: "bg-[#303f9f]", b: "off" },
  { n: "11801809 - Saswata...", c: "bg-[#1565c0]", b: "head" },
  { n: "11801848 - Manavar...", c: "bg-[#7b1fa2]", b: "head" },
  { n: "11802962 - Manikon...", c: "bg-[#01579b]", b: "off" },
  { n: "11803111 - Manoj S...", c: "bg-[#4527a0]", b: "head" },
  { n: "11803157 - Aman P...", c: "bg-[#1565c0]", b: "head" },
  { n: "11804147 - Battul Vi...", c: "bg-[#4527a0]", b: "head" },
  { n: "11804163 - Amit Gu...", c: "bg-[#01579b]", b: "off" },
]

const trayApps = [
  <svg key="a" width="16" height="16" viewBox="0 0 16 16"><path d="M1 1H7.5V7.5H1ZM8.5 1H15V7.5H8.5ZM1 8.5H7.5V15H1ZM8.5 8.5H15V15H8.5Z" fill="#1e8fe8" /></svg>,
  <svg key="b" width="16" height="15" viewBox="0 0 16 15"><rect width="16" height="15" rx="1" fill="#1670c8" /><rect x="2" y="2" width="5" height="11" fill="#fff" /><rect x="8" y="2" width="6" height="7" fill="#7fc4f5" /></svg>,
  <svg key="c" width="15" height="15" viewBox="0 0 15 15"><circle cx="7.5" cy="7.5" r="7" fill="#5f60c4" /><rect x="4" y="5" width="7" height="5" rx="1" fill="#fff" /></svg>,
  <svg key="d" width="16" height="16" viewBox="0 0 16 16"><circle cx="8" cy="8" r="7.5" fill="#6a2c9c" /><circle cx="9" cy="8" r="4" fill="none" stroke="#cfa5e8" /><circle cx="10" cy="8" r="1.5" fill="#cfa5e8" /></svg>,
  <EdgeIcon key="e" w={16} h={16} />,
  <FolderIcon key="f" w={16} h={14} />,
  <svg key="g" width="15" height="15" viewBox="0 0 15 15"><rect y="2" width="15" height="13" rx="1" fill="#12457c" /><rect x="4.5" y="5" width="3" height="3" fill="#e85a30" /><rect x="8" y="5" width="3" height="3" fill="#6cb82c" /><rect x="4.5" y="8.5" width="3" height="3" fill="#2c9be8" /><rect x="8" y="8.5" width="3" height="3" fill="#f3b52a" /></svg>,
  <svg key="h" width="11" height="15" viewBox="0 0 11 15"><rect width="11" height="15" rx="1" fill="#7c8a98" /><rect x="2" y="2" width="7" height="3" fill="#d7e3f2" /><path d="M2 7H9M2 10H9" stroke="#d7e3f2" strokeWidth="1.5" /></svg>,
  <svg key="i" width="16" height="16" viewBox="0 0 16 16"><circle cx="8" cy="8" r="7.5" fill="#e86a2a" /><circle cx="8" cy="9" r="4" fill="#6a2c9c" /><path d="M2 3C6 1 12 1 14 5 12 3 8 3 6 5Z" fill="#f9b42c" /></svg>,
  <div key="j" className="w-[21px] h-[24px] bg-[#eef3fa] flex items-center justify-center border-b-2 border-[#1072d8]"><ChromeIcon w={15} h={15} /></div>,
  <ShareIcon key="k" w={15} h={15} />,
  <svg key="l" width="14" height="14" viewBox="0 0 14 14"><rect width="14" height="14" fill="#3fa04a" /><rect x="2" y="2" width="10" height="10" fill="#e8f5e8" /><path d="M5 4 10 7 5 10Z" fill="#3fa04a" /></svg>,
]

// the captured screen inside the meeting view
const SharedScreen = () => (
  <div className="w-[881px] h-[496px] flex flex-col shrink-0 blur-[0.35px] relative">
    <div className="h-[20px] bg-[#202124] flex items-center text-[#bdbfc2] text-[8px] relative">
      <div className="w-[141px] flex items-center pl-[8px]">
        <div className="w-[9px] h-[9px] border border-white mr-[7px] shrink-0"></div>
        <span className="whitespace-nowrap">GATE CS Applied Course</span>
        <X size={7} className="ml-auto mr-[6px]" />
      </div>
      <div className="w-[139px] h-[20px] bg-[#35363a] rounded-t-[4px] flex items-center pl-[9px] text-[#d8d9da]">
        <div className="w-[7px] h-[7px] rounded-full bg-[#f09a1a] mr-[4px] shrink-0"></div>
        <span className="whitespace-nowrap">CodeTantra - Teach &amp; Learn</span>
        <div className="ml-auto w-[6px] h-[6px] rounded-full bg-[#d98a80] mr-[5px]"></div>
        <X size={7} className="mr-[6px] text-white" />
      </div>
      <Plus size={9} className="ml-[6px]" />
      <div className="ml-auto flex items-center gap-[17px] pr-[10px]">
        <div className="w-[7px] h-[7px] rounded-full bg-[#ccc]"></div>
        <Minus size={8} />
        <div className="w-[6px] h-[7px] border border-[#ccc]"></div>
        <X size={8} />
      </div>
    </div>
    <div className="h-[18px] bg-[#35363a] flex items-center pl-[8px] text-[#bbb]">
      <ArrowLeft size={9} />
      <ArrowRight size={9} className="ml-[9px] text-[#777]" />
      <RotateCw size={9} className="ml-[9px]" />
      <div className="ml-[9px] w-[658px] h-[15px] rounded-full bg-[#202124] flex items-center pl-[6px] text-[9px] whitespace-nowrap">
        <Lock size={6} className="mr-[4px]" />
        <span className="text-[#e5e5e5]">lovelyprofessionaluniversity.codetantra.com</span>
        <span className="text-[#777]">/secure/tla/jnr.jsp?m=a4cf4c7d-e966-391f-9a1f-18e0ae3f4195</span>
        <Star size={8} className="ml-auto mr-[5px]" />
      </div>
      <div className="ml-[13px] flex items-center gap-[9px]">
        <div className="w-[9px] h-[9px] rounded-full bg-[#16a37a]"></div>
        <div className="w-[9px] h-[9px] rounded-full bg-[#e64a3c]"></div>
        <div className="w-[9px] h-[8px] rounded-[2px] border border-[#bbb]"></div>
        <div className="w-[9px] h-[8px] bg-[#3a8fe0] rotate-45 scale-75"></div>
        <div className="w-[9px] h-[9px] rounded-[2px] bg-[#ddd]"></div>
        <div className="w-[9px] h-[7px] border-y border-[#ddd]"></div>
        <div className="w-[11px] h-[11px] rounded-full bg-[#b8a8b8]"></div>
        <MoreVertical size={9} />
      </div>
    </div>
    <div className="h-[21px] bg-[#35363a] flex items-center pl-[9px] text-[8px] text-[#ccc]">
      {bookmarks.map((b, i) => (
        <div key={i} style={{ width: b.w }} className="flex items-center whitespace-nowrap shrink-0">
          <div className={`w-[7px] h-[7px] rounded-[1px] ${b.c}`} style={{ marginRight: b.tx - 7 }}></div>
          {b.t}
        </div>
      ))}
      <span className="ml-[1px] mr-[8px]">»</span>
      <div className="w-px h-[12px] bg-[#666] mr-[6px]"></div>
      <div className="w-[7px] h-[9px] border border-[#ccc] mr-[3px]"></div>
      <span className="whitespace-nowrap">Reading list</span>
    </div>
    <div className="h-[20px] bg-[#1072d8] relative flex items-center justify-center text-white text-[8.5px] tracking-[-0.2px] font-bold shrink-0">
      <div className="absolute left-[432px] top-0 w-0 h-0 border-l-[4px] border-r-[4px] border-t-[5px] border-l-transparent border-r-transparent border-t-[#e53935]"></div>
      Meeting time remaining: 16:54
    </div>
    <div className="flex-1 flex min-h-0">
      <div className="w-[104px] bg-[#f3f6fa] flex flex-col shrink-0">
        <div className="h-[23px] border-b border-[#bbb] mr-[1px] pl-[6px]">
          <div className="w-[15px] h-[15px] rounded-full bg-[repeating-linear-gradient(150deg,#e8801a_0_3px,#5a3a1a_3px_4px)]"></div>
        </div>
        <div className="mt-[10px] pl-[6px] text-[6.5px] leading-[10px] font-medium text-[#5a6570]">MESSAGES</div>
        <div className="mt-[6px] ml-[5px] h-[23px] bg-[#dde6f0] border border-[#93b8e4] flex items-center pl-[5px] text-[7.5px] font-medium text-[#333]">
          <div className="w-[12px] h-[11px] rounded-full border border-[#7a8794] mr-[6px]"></div>
          Public Chat
        </div>
        <div className="mt-[8px] pl-[6px] text-[6.5px] leading-[10px] font-medium text-[#5a6570]">USERS (29)</div>
        <div className="flex-1 flex min-h-0 mt-[4px]">
          <div className="flex-1 pl-[10px] overflow-hidden">
            {nestedUsers.map((u) => (
              <div key={u.n} className="h-[29.2px] flex items-center gap-[6px]">
                <div className={`relative w-[18px] h-[18px] ${u.square ? "rounded-[2px]" : "rounded-full"} ${u.c} text-white text-[7px] font-bold flex items-center justify-center shrink-0`}>
                  {u.square ? "Us" : "11"}
                  <Badge small b={u.b} />
                </div>
                <div className="whitespace-nowrap">
                  <div className="text-[7.2px] tracking-[-0.15px] leading-[10px] text-[#3a4450]">{u.n}</div>
                  {!u.nolock && <div className="text-[6px] leading-[9px] text-[#8d96a0]">Locked</div>}
                </div>
              </div>
            ))}
          </div>
          <div className="w-[2px] mr-[1px] bg-[#9ba0a5]"></div>
        </div>
      </div>
      <div className="w-[197px] bg-white flex flex-col shrink-0">
        <div className="h-[23px] flex items-center pl-[11px] text-[7px] font-medium text-[#4a5663] shrink-0">
          <ChevronLeft size={8} className="mr-[5px]" />
          Public Chat
          <MoreVertical size={9} className="ml-auto mr-[6px] text-[#333]" />
        </div>
        <div className="h-[329px] flex shrink-0">
          <div className="flex-1 pl-[9px] overflow-hidden pt-[5px]">
            {chat.map((m, i) => (
              <div key={i} className="flex mb-[5.1px]">
                <div className={`w-[18px] h-[18px] mt-[3px] rounded-full ${m.c} text-white text-[7px] font-bold flex items-center justify-center mr-[5px] shrink-0`}>11</div>
                <div>
                  <div className="h-[12px] leading-[12px] whitespace-nowrap text-[7.5px] font-medium text-[#1f2b38]">
                    {m.n}
                    <span className="ml-[4px] text-[5.5px] font-normal text-[#a2abb4]">{m.t}</span>
                  </div>
                  {m.b.map((l, j) => (
                    <div key={l} className={`h-[12px] leading-[12px] text-[7.5px] text-[#5b6876] ${j > 0 ? "mt-[2px]" : ""}`}>{l}</div>
                  ))}
                </div>
              </div>
            ))}
          </div>
          <div className="w-[2px] mr-[3px] bg-[#b5b9bd]"></div>
        </div>
        <div className="flex items-center pl-[10px] pt-[1px]">
          <div className="w-[158px] h-[26px] border border-[#aab6c2] rounded-[2px] flex items-center pl-[8px] text-[7.5px] text-[#9ea6ae]">Send message to Public Chat</div>
          <div className="ml-[6px] w-[19px] h-[19px] rounded-full bg-[#1272d8] flex items-center justify-center text-white"><Send size={9} className="rotate-45 -ml-[2px]" /></div>
        </div>
      </div>
      <div className="flex-1 bg-[#03152b] flex flex-col relative text-white">
        <div className="h-[31px] flex items-center pl-[11px] shrink-0">
          <ChevronLeft size={7} className="-mr-[1px]" />
          <svg width="9" height="11" viewBox="0 0 9 11" fill="none" stroke="#fff" strokeWidth=".9"><circle cx="4.5" cy="3" r="2.3" /><path d="M.5 10.5Q.5 7 4.5 7T8.5 10.5Z" /></svg>
          <span className="ml-[150px] text-[7.5px] tracking-[-0.25px] whitespace-nowrap text-[#c9d0d8]">INT348-Practical by : 20339:Usha Mittal ( KOM78INT348 )</span>
          <div className="w-px h-[10px] bg-[#3c4a5a] ml-[9px]"></div>
          <div className="w-[9px] h-[9px] rounded-full border border-white ml-[10px] flex items-center justify-center"><div className="w-[5px] h-[5px] rounded-full bg-[#e53935]"></div></div>
          <span className="text-[7.5px] ml-[7px] text-[#c9d0d8]">53:57</span>
          <MoreVertical size={10} className="ml-auto mr-[10px]" />
        </div>
        <div className="flex gap-[3px] pl-[10px] text-[8px] text-[#aab4c0]">
          <div className="w-[59px] h-[11px] rounded-full bg-[#2e2670] text-center leading-[11px]">Usha Mittal</div>
          <div className="w-[103px] h-[11px] rounded-full bg-[#0b3a6e] text-center leading-[11px]">11807504 - Rajat Mah...</div>
        </div>
        <div className="mt-auto pb-[6px] pl-[14px] flex items-center relative">
          <div className="w-[24px] h-[24px] rounded-full bg-[#1072d8] flex items-center justify-center"><Plus size={13} /></div>
          <div className="ml-[205px] flex gap-[12px]">
            <div className="w-[24px] h-[24px] rounded-full bg-[#1072d8] flex items-center justify-center"><Mic size={11} /></div>
            <div className="w-[24px] h-[24px] rounded-full bg-[#1072d8] flex items-center justify-center"><Phone size={10} /></div>
            <div className="w-[24px] h-[24px] rounded-full border border-[#aaa] flex items-center justify-center text-[#bbb]"><VideoOff size={11} /></div>
            <div className="w-[24px] h-[24px] rounded-full bg-[#1072d8] flex items-center justify-center relative">
              <Monitor size={11} />
              <Pointer size={9} fill="#fff" className="absolute left-[5px] top-[13px] text-[#222]" />
            </div>
          </div>
        </div>
        <div className="absolute left-[322px] top-[339px] w-[83px] h-[14px] bg-[#333] rounded-[2px] text-[7px] leading-[14px] text-center whitespace-nowrap text-[#ddd]">Stop sharing your screen</div>
        <div className="absolute left-[323px] top-[269px] right-0 h-[23px] bg-[#2b2c2e] flex items-center pl-[5px] text-[7.5px] text-[#ddd] whitespace-nowrap overflow-hidden">
          <span className="mr-[4px] font-bold">||</span>
          lovelyprofessionaluniversity.codetantra.com is sharing your screen.
          <div className="ml-[7px] w-[40px] h-[19px] shrink-0 rounded-l-[2px] bg-[#8ab4f8] text-[#222] leading-[19px] pl-[8px]">Stop sha</div>
        </div>
        <div className="absolute left-0 right-0 top-[188px] text-center text-[16px] font-bold whitespace-nowrap">You are currently sharing your screen</div>
      </div>
    </div>
    <div className="h-[28px] bg-gradient-to-r from-[#eef1f6] via-[#d6e0f2] to-[#e6edf7] flex items-center text-[#333] shrink-0">
      <div className="ml-[291px] flex items-center">
        {trayApps.map((a, i) => (
          <div key={i} className="w-[25.2px] flex items-center justify-center">{a}</div>
        ))}
      </div>
      <div className="ml-auto flex items-center text-[7.5px]">
        <ChevronUp size={9} className="mr-[7px]" />
        <Mic size={10} className="mr-[7px] text-[#4a7fc9]" />
        <Wifi size={9} className="mr-[5px]" />
        <Volume1 size={10} className="mr-[4px]" />
        <div className="w-[9px] h-[7px] bg-[#222] mr-[9px]"></div>
        <div className="text-right leading-[10px] mr-[6px]">13:44<br />26-08-2021</div>
        <div className="w-[10px] h-[10px] rounded-full bg-[#1072d8] text-white text-[6px] text-center leading-[10px] mr-[9px]">1</div>
      </div>
    </div>
  </div>
)

const MeetingPanel = () => (
  <div className="flex-1 bg-[#03172e] flex flex-col text-white min-w-0">
    <div className="h-[47px] flex items-center pl-[14px] shrink-0">
      <ChevronLeft size={12} className="-mr-[2px]" />
      <svg width="15" height="17" viewBox="0 0 15 17" fill="none" stroke="#fff" strokeWidth="1.3"><circle cx="7.5" cy="5" r="3.8" /><path d="M.7 16Q.7 11 7.5 11T14.3 16Z" /></svg>
      <span className="ml-[228px] text-[12.5px] tracking-[-0.75px] whitespace-nowrap w-[280px]">INT348-Practical by : 20339:Usha Mittal ( KOM78INT348 )</span>
      <div className="w-px h-[15px] bg-[#3c4a5a] ml-[15px]"></div>
      <div className="w-[15px] h-[15px] rounded-full border border-white ml-[13px] flex items-center justify-center"><div className="w-[9px] h-[9px] rounded-full bg-[#e8141c]"></div></div>
      <span className="ml-[10px] text-[12.5px] tracking-[-0.8px]">53:56</span>
      <MoreVertical size={17} className="ml-auto mr-[16px]" />
    </div>
    <div className="flex gap-[5px] pl-[13px] h-[19px] shrink-0 text-[13px] tracking-[-0.6px] font-medium">
      <div className="w-[94px] rounded-full bg-[#5e2ea5] flex items-center pl-[4px]">
        <div className="w-[13px] h-[13px] rounded-full bg-[#0f8a8a] flex items-center justify-center mr-[6px] shrink-0"><Mic size={9} /></div>
        <span className="whitespace-nowrap">Usha Mittal</span>
      </div>
      <div className="w-[161px] rounded-full bg-[#0f3f7a] flex items-center pl-[4px] text-[#7f93ac]">
        <div className="w-[13px] h-[13px] rounded-full bg-[#0b5a6a] mr-[6px] shrink-0"></div>
        <span className="whitespace-nowrap">11807504 - Rajat Mah...</span>
      </div>
    </div>
    <div className="mt-[7px] pl-[6px] shrink-0"><SharedScreen /></div>
    <div className="flex-1 flex items-center relative">
      <div className="ml-[20px] w-[38px] h-[37px] rounded-full border-2 border-white flex items-center justify-center"><Hand size={18} strokeWidth={1.5} /></div>
      <div className="ml-[375px] w-[38px] h-[37px] rounded-full bg-[#1072d8] flex items-center justify-center"><Headphones size={20} /></div>
      <div className="ml-[19px] w-[37px] h-[37px] rounded-full border-2 border-[#9a9a9a] flex items-center justify-center text-[#aaa]"><VideoOff size={18} /></div>
    </div>
  </div>
)

const Browser = () => (
  <div className="h-[728px] flex flex-col shrink-0">
    <div className="h-[32px] bg-[#e6e6e6] flex items-end">
      <div className="w-[46px] h-[31px] flex items-center justify-center">
        <div className="w-[14px] h-[15px] rounded-[2px] border-[1.5px] border-[#222] border-t-[3px]"></div>
      </div>
      <div className="w-[241px] h-[32px] bg-[#f7f7f7] rounded-t-[5px] flex items-center pl-[12px] text-[12.5px] tracking-[-0.2px] text-[#5a5a5a]">
        <svg width="16" height="16" viewBox="0 0 16 16" className="mr-[10px]">
          <circle cx="8" cy="8" r="4.5" fill="#ef7d14" />
          <path d="M8 0V3M8 13V16M0 8H3M13 8H16M2.3 2.3 4.5 4.5M11.5 11.5 13.7 13.7M13.7 2.3 11.5 4.5M2.3 13.7 4.5 11.5" stroke="#f2b33c" strokeWidth="1.5" />
        </svg>
        <Volume1 size={16} strokeWidth={1.3} className="mr-[10px] text-[#222]" />
        <span className="whitespace-nowrap w-[146px]">CodeTantra - Teach &amp; Learn</span>
        <X size={12} className="ml-[8px] text-[#222]" />
      </div>
      <div className="h-[31px] flex items-center pl-[10px]"><Plus size={17} strokeWidth={1.3} className="text-[#333]" /></div>
      <div className="ml-auto flex items-center h-[29px] text-[#777]">
        <Minus size={14} strokeWidth={1.2} />
        <div className="w-[12px] h-[12px] ml-[32px] border border-[#777]"></div>
        <X size={15} strokeWidth={1.1} className="ml-[31px] mr-[15px]" />
      </div>
    </div>
    <div className="h-[39px] bg-[#f7f7f7] flex items-center text-[#333] border-b border-[#e5e5e5]">
      <ArrowLeft size={18} strokeWidth={1.3} className="ml-[19px]" />
      <ArrowRight size={18} strokeWidth={1.3} className="ml-[26px] text-[#c8c8c8]" />
      <RotateCw size={18} strokeWidth={1.3} className="ml-[26px]" />
      <House size={17} strokeWidth={1.3} className="ml-[26px]" />
      <div className="ml-[19px] w-[986px] h-[30px] bg-white rounded-[4px] flex items-center pl-[16px] text-[13.6px] whitespace-nowrap">
        <Lock size={15} strokeWidth={1.2} className="mr-[16px] text-[#555]" />
        <span className="text-[#777]">https://</span>
        <span className="text-[#222]">lovelyprofessionaluniversity.codetantra.com</span>
        <span className="text-[#777]">/secure/tla/jnr.jsp?m=a4cf4c7d-e966-391f-9a1f-18e0ae3f4195</span>
        <ZoomOut size={16} strokeWidth={1.2} className="ml-auto mr-[19px] text-[#666]" />
        <Star size={16} strokeWidth={1.2} className="mr-[12px] text-[#555]" />
      </div>
      <Star size={17} strokeWidth={1.3} className="ml-[19px]" />
      <div className="ml-[27px] w-[15px] h-[15px] rounded-[3px] border-[1.3px] border-[#222] flex items-center justify-center"><Plus size={10} /></div>
      <div className="ml-[29px] w-[24px] h-[24px] rounded-full bg-gradient-to-b from-[#6a6a6a] via-[#3a2a2a] to-[#141414]"></div>
      <MoreHorizontal size={17} className="ml-[22px]" />
    </div>
    <div className="h-[31px] bg-[#1072d8] relative flex items-center justify-center text-white text-[13px] tracking-[-0.8px] font-bold shrink-0">
      <div className="absolute left-[670px] top-0 w-0 h-0 border-l-[5px] border-r-[5px] border-t-[6px] border-l-transparent border-r-transparent border-t-[#e53935]"></div>
      Meeting time remaining: 16:54
    </div>
    <div className="flex-1 flex min-h-0">
      <Sidebar />
      <ChatPanel />
      <MeetingPanel />
    </div>
  </div>
)

const Taskbar2 = () => (
  <div className="h-[40px] bg-[#1e2229] flex text-white shrink-0">
    <div className="w-[48px] flex items-center justify-center"><WinLogo s={17} /></div>
    <div className="w-[48px] flex items-center justify-center"><Search size={18} strokeWidth={1.3} className="-scale-x-100" /></div>
    <div className="w-[48px] flex items-center justify-center"><div className="w-[15px] h-[18px] rounded-full border-[2.5px] border-white"></div></div>
    <div className="w-[48px] flex items-center justify-center"><TaskView /></div>
    <div className="w-[2px]"></div>
    <div className="w-[49px] flex items-center justify-center relative"><EdgeIcon w={25} h={30} /><div className="absolute bottom-0 left-[4px] right-[5px] h-[2px] bg-[#6db3f2]"></div></div>
    <div className="w-[49px] flex items-center justify-center relative"><FolderIcon w={24} h={28} /><div className="absolute bottom-0 left-[4px] right-[5px] h-[2px] bg-[#6db3f2]"></div></div>
    <div className="w-[49px] flex items-center justify-center"><ChromeIcon w={24} h={30} /></div>
    <div className="w-[49px] flex items-center justify-center"><SublimeIcon w={24} h={30} /></div>
    <div className="w-[49px] flex items-center justify-center relative"><ShareIcon w={24} h={30} /><div className="absolute bottom-0 left-[4px] right-[5px] h-[2px] bg-[#6db3f2]"></div></div>
    <div className="w-[48px] bg-[#4a5057] flex items-center justify-center relative"><ShareIcon w={24} h={30} /><div className="absolute bottom-0 inset-x-0 h-[2px] bg-[#6db3f2]"></div></div>
    <div className="ml-auto w-[72px] text-center text-[13px] leading-[18px] pt-[2px] tracking-[-0.4px]">13:44<br />26-08-2021</div>
  </div>
)

export default function App() {
  return (
    <div className="w-[3286px] h-[1080px] flex bg-black overflow-hidden font-[Roboto,sans-serif]">
      <div className="w-[1920px] h-full flex flex-col relative shrink-0">
        <Explorer />
        <Taskbar1 />
        <Dialog />
      </div>
      <div className="flex-1 flex flex-col min-w-0">
        <Browser />
        <Taskbar2 />
      </div>
    </div>
  )
}
